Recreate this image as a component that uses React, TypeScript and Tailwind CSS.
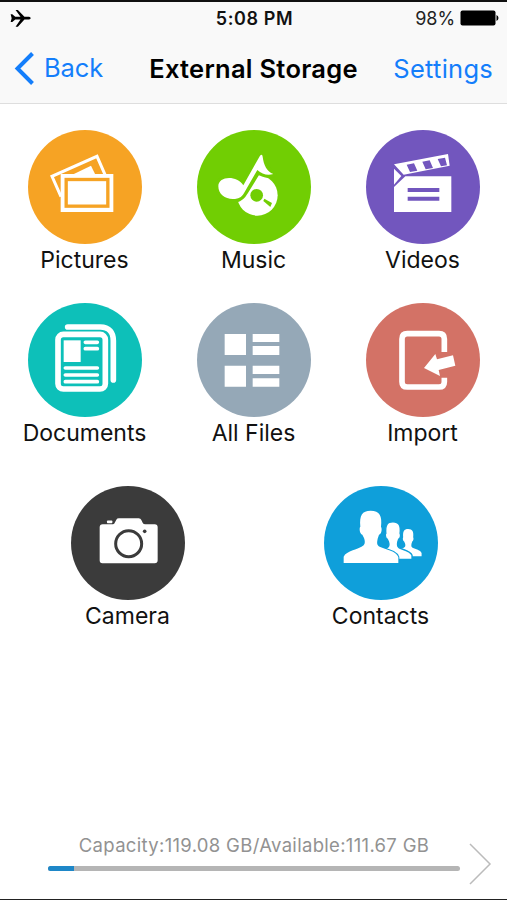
import type { ReactNode } from "react";

type TileProps = { label: string; color: string; viewBox: string; children: ReactNode };

function Tile({ label, color, viewBox, children }: TileProps) {
  return (
    <button className="flex flex-col items-center">
      <span className={`block h-[114px] w-[114px] overflow-hidden rounded-full ${color}`}>
        <svg viewBox={viewBox} className="block h-full w-full" fill="white">
          {children}
        </svg>
      </span>
      <span className="mb-px block h-8 text-[23px] leading-8 whitespace-nowrap text-[#111]">{label}</span>
    </button>
  );
}

function PicturesIcon() {
  return (
    <>
      <path d="M123 224 96 163 231 103 255 158" fill="none" stroke="white" strokeWidth="9" />
      <path d="M124 194 113 168 217 122 233 156" fill="none" stroke="#f6a324" strokeWidth="8" />
      <path d="M129 172 213 131 228 162Z" />
      <rect x="122" y="156" width="158" height="114" />
      <rect x="138.500" y="172.500" width="125" height="80" fill="none" stroke="#f6a324" strokeWidth="10" />
    </>
  );
}

function MusicIcon() {
  return (
    <>
      <circle cx="203" cy="220" r="61" />
      <path d="M214 98 161 190C144 164 88 162 86 192C86 222 111 234 139 232C151 229 159 221 165 210L205 145C220 158 235 160 251 156C226 143 222 126 218 101Z" stroke="#71ce03" strokeWidth="20" fill="#71ce03" strokeLinejoin="round" />
      <path d="M211 101Q218 95 219 104C222 130 232 148 251 156C234 161 217 157 203 144L165 210C159 223 150 230 136 231C109 234 86 218 86 193C86 162 141 159 161 190Z" />
      <circle cx="201" cy="220" r="19" fill="#71ce03" />
      <path d="m224 230 23 13-5 12-21-18Z" fill="#71ce03" />
    </>
  );
}

function VideosIcon() {
  return (
    <>
      <path d="m108 127 162-31 5 35-138 27Z" />
      <path d="m108 140 22 22-22 26Z" />
      <path d="M142 163H280V270H108V195Z" />
      <path d="m146 128 22-4 10 22-22 4ZM193 119l22-4 10 23-22 4ZM239 111l22-4 6 23-18 3Z" fill="#7256be" />
      <path d="M149 198h95v12h-95ZM149 224h95v12h-95Z" fill="#7256be" />
    </>
  );
}

function DocumentsIcon() {
  return (
    <>
      <path d="M143 96H241C268 96 280 113 280 137V255" fill="none" stroke="white" strokeWidth="17" strokeLinecap="round" />
      <rect x="114" y="118" width="142" height="164" rx="16" fill="none" stroke="white" strokeWidth="17" />
      <rect x="131" y="136" width="51" height="65" />
      <path d="M196 142h36M196 161h36M136 219h96M136 240h96M136 260h96" stroke="white" strokeWidth="11" strokeLinecap="round" />
    </>
  );
}

function FilesIcon() {
  return <path d="M105 117h64v63h-64ZM189 117h80v24h-80ZM189 153h80v27h-80ZM105 212h64v63h-64ZM189 212h80v25h-80ZM189 250h80v25h-80Z" />;
}

function ImportIcon() {
  return (
    <>
      <path d="M259 171V132Q259 116 243 116H148Q132 116 132 132V260Q132 276 148 276H243Q259 276 259 260V248" fill="none" stroke="white" strokeWidth="17" />
      <path d="m198 219 34-42 5 16 48-12 7 31-50 13 4 18Z" />
    </>
  );
}

function CameraIcon() {
  return (
    <>
      <path d="M120 133h31q4 0 6-6l4-8q2-4 8-4h59q6 0 8 5l4 8q2 5 8 5h28q9 0 9 9v99q0 9-9 9H119q-8 0-8-9v-99q0-9 9-9Z" />
      <rect x="133" y="121.500" width="16" height="8" rx="2" />
      <circle cx="198" cy="191" r="39" fill="none" stroke="#3b3b3b" strokeWidth="9" />
      <circle cx="246" cy="154" r="5.500" fill="#3b3b3b" />
    </>
  );
}

const person =
  "M84 249V230C92 212 129 209 144 196C149 191 148 182 145 174L140 164C132 162 130 143 134 140C131 106 139 92 165 92C192 92 200 108 196 140C200 146 198 162 190 164L186 176C183 190 184 196 192 200C211 209 241 212 248 231V249Z";

function ContactsIcon() {
  return (
    <>
      <path d={person} transform="translate(197.500 99) scale(.485 .520)" />
      <path d={person} transform="translate(118 59) scale(.690 .722)" stroke="#0f9fda" strokeWidth="6" />
      <path d={person} stroke="#0f9fda" strokeWidth="6" />
      <path d={person} />
    </>
  );
}

export default function App() {
  return (
    <div className="flex h-[900px] w-[507px] flex-col overflow-hidden border-t-2 border-b border-t-[#111] border-b-[#222] bg-white font-['Inter','Liberation_Sans',sans-serif]">
      <header className="h-[102px] shrink-0 border-b border-[#dedede] bg-[#f9f9f9]">
        <div className="grid h-8 grid-cols-3 items-center pr-2 pl-[10px]">
          <svg viewBox="30 24 64 56" className="h-[19px] w-[21px]">
            <path d="M32 39h5l9 8h16L47 26h7l20 21h14q5 1 5 4t-5 4H74L54 77h-7l15-22H46l-9 8h-5l3-12Z" />
          </svg>
          <span className="justify-self-center text-[18px] font-semibold tracking-[0.600px] whitespace-nowrap text-[#111]">5:08 PM</span>
          <div className="flex items-center gap-[5px] justify-self-end">
            <span className="text-[18px] tracking-[-0.100px] text-[#222]">98%</span>
            <svg viewBox="0 0 39 16" className="h-4 w-[39px]">
              <rect x=".5" y=".5" width="35" height="15" rx="2" />
              <path d="M36.500 5q2 1 2 3t-2 3Z" />
            </svg>
          </div>
        </div>
        <div className="grid h-[69px] grid-cols-[1fr_auto_1fr] items-center px-[14px]">
          <button className="flex items-center gap-[10px] justify-self-start text-[#147efb]">
            <svg viewBox="0 0 20 33" className="h-[33px] w-5" fill="none" stroke="currentColor" strokeWidth="4">
              <path d="m18.500 1.500-15 15 15 15" />
            </svg>
            <span className="text-[25.500px] tracking-[-0.100px]">Back</span>
          </button>
          <h1 className="pt-px text-[25.500px] font-semibold tracking-[0.270px] whitespace-nowrap text-black">External Storage</h1>
          <button className="justify-self-end pt-px text-[25.500px] tracking-[0.250px] text-[#147efb]">Settings</button>
        </div>
      </header>
      <main className="flex-1 pt-[26px]">
        <div className="grid grid-cols-3 gap-y-[26px]">
          <Tile label="Pictures" color="bg-[#f6a324]" viewBox="24 24 342 342"><PicturesIcon /></Tile>
          <Tile label="Music" color="bg-[#71ce03]" viewBox="22 24 342 342"><MusicIcon /></Tile>
          <Tile label="Videos" color="bg-[#7256be]" viewBox="24 24 342 342"><VideosIcon /></Tile>
          <Tile label="Documents" color="bg-[#0dc0b9]" viewBox="24 24 342 342"><DocumentsIcon /></Tile>
          <Tile label="All Files" color="bg-[#95a8b7]" viewBox="22 24 342 342"><FilesIcon /></Tile>
          <Tile label="Import" color="bg-[#d37266]" viewBox="24 24 342 342"><ImportIcon /></Tile>
        </div>
        <div className="mt-9 grid grid-cols-2 pl-px">
          <Tile label="Camera" color="bg-[#3b3b3b]" viewBox="25 18 342 342"><CameraIcon /></Tile>
          <Tile label="Contacts" color="bg-[#0f9fda]" viewBox="25 18 342 342"><ContactsIcon /></Tile>
        </div>
      </main>
      <footer className="flex h-[68px] shrink-0 pl-12">
        <div className="w-[412px]">
          <p className="text-center text-[18.500px] leading-7 tracking-[0.320px] whitespace-nowrap text-[#929292]">Capacity:119.08 GB/Available:111.67 GB</p>
          <div className="mt-[7px] h-[5px] overflow-hidden rounded-full bg-[#b5b5b5]">
            <div className="h-full w-[26px] bg-[#1e87c8]" />
          </div>
        </div>
        <svg viewBox="0 0 23 42" className="mt-3 ml-[9px] h-[42px] w-[23px]" fill="none" stroke="#bbb" strokeWidth="1.500">
          <path d="m1 1 20 20L1 41" />
        </svg>
      </footer>
    </div>
  );
}
